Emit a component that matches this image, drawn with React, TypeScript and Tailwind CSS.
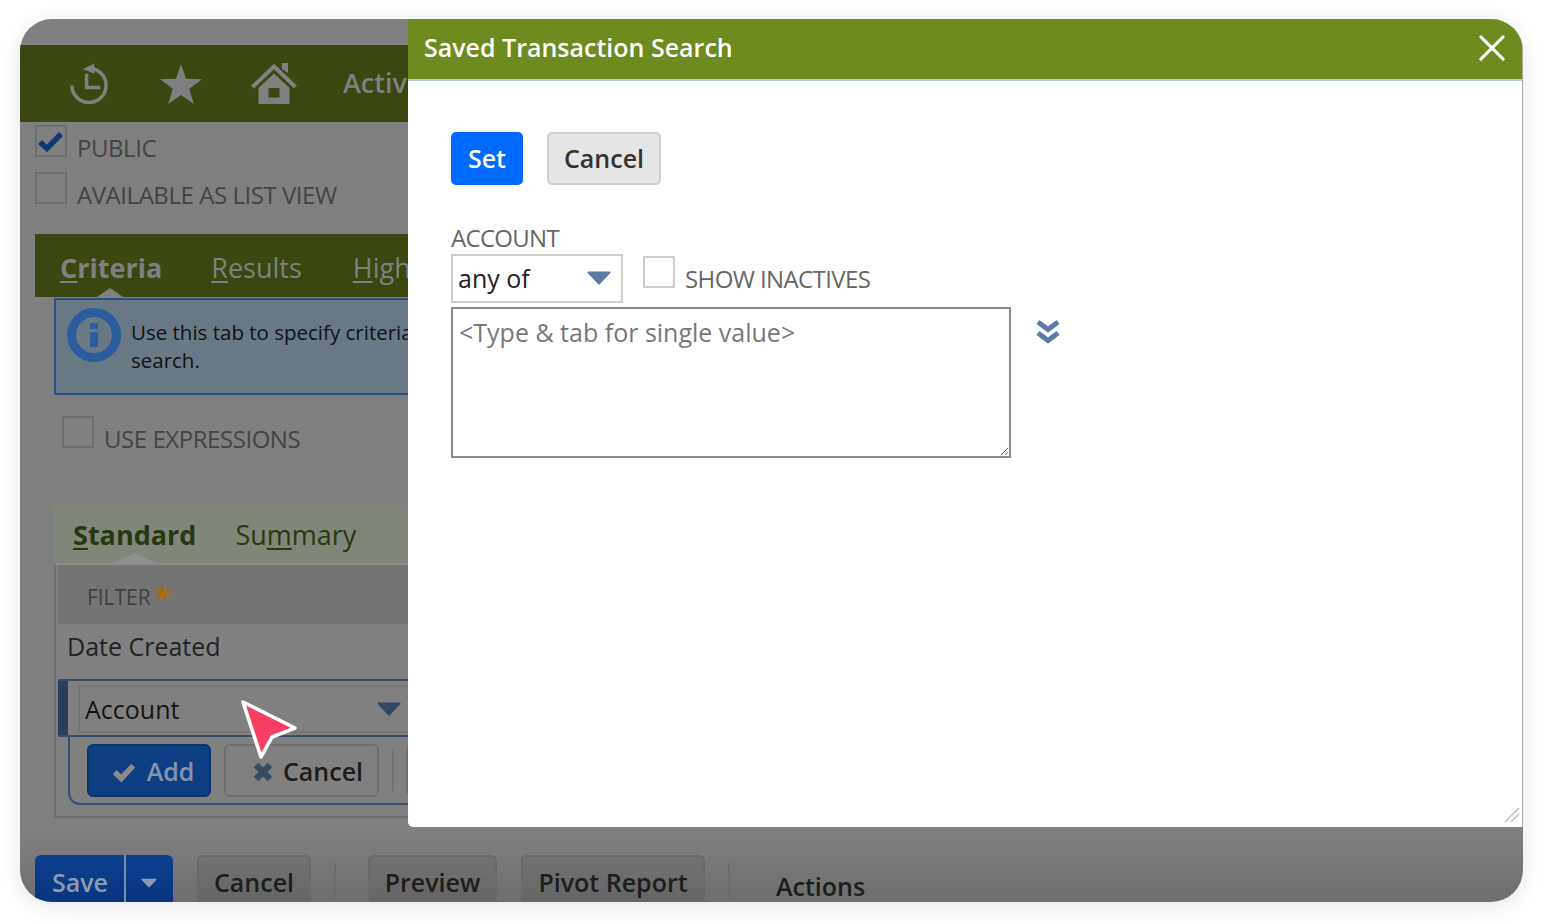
import React from "react";

function Box({ checked = false, border = "border-[#6e6e6e]" }: { checked?: boolean; border?: string }) {
  return (
    <span className={`relative block h-[32px] w-[32px] shrink-0 border-2 ${border}`}>
      {checked && (
        <svg viewBox="0 0 32 32" className="absolute -left-[2px] -top-[2px] h-[32px] w-[32px]">
          <path d="M5 17 L12 23.5 L26 9" fill="none" stroke="#103872" strokeWidth="5.5" />
        </svg>
      )}
    </span>
  );
}

function CheckRow({ label, checked }: { label: string; checked?: boolean }) {
  return (
    <div className="flex h-[47px]">
      <Box checked={checked} />
      <span className="ml-[10px] mt-[10px] text-[24px] leading-[26px] tracking-[-0.45px] text-[#444444]">{label}</span>
    </div>
  );
}

function DownCaret({ className, color }: { className: string; color: string }) {
  return (
    <svg viewBox="0 0 24 14" className={className}>
      <path d="M1.5 1.5 H22.5 L12 12.5 Z" fill={color} stroke={color} strokeWidth="2" strokeLinejoin="round" />
    </svg>
  );
}

function DimButton({ label, className }: { label: string; className: string }) {
  return (
    <div
      className={`flex h-[47px] items-center justify-center rounded-t-[6px] border-2 border-b-0 border-[#696969] bg-gradient-to-b from-[#737373] to-[#646464] pt-[6px] text-[25px] font-semibold text-[#1d1d1d] ${className}`}
    >
      {label}
    </div>
  );
}

function Background() {
  return (
    <div className="flex h-full w-[1400px] flex-col pt-[26px]">
      {/* top navigation */}
      <div className="flex h-[77px] shrink-0 items-center bg-[#3a4710] pl-[50px] text-[#808080]">
        <svg viewBox="0 0 40 42" className="h-[41px] w-[39px]">
          <path d="M2 23 A17.5 17.5 0 1 0 19 5.5" fill="none" stroke="#808080" strokeWidth="3.6" />
          <path d="M13 6 L25 0.5 L25 11 Z" fill="#808080" />
          <path d="M17 11 V25 H31" fill="none" stroke="#808080" strokeWidth="3.6" />
        </svg>
        <svg viewBox="0 0 42 40" className="ml-[51px] h-[40px] w-[42px]">
          <path d="M21 0 L26 14.8 L42 15.2 L29.2 24.8 L33.8 40 L21 31 L8.2 40 L12.8 24.8 L0 15.2 L16 14.8 Z" fill="#808080" />
        </svg>
        <svg viewBox="0 0 46 41" className="ml-[49px] h-[41px] w-[46px]">
          <path d="M31 0 H37 V10 L31 6 Z" fill="#808080" />
          <path d="M1.5 24 L23 3.5 L44.5 24" fill="none" stroke="#808080" strokeWidth="4" />
          <path fillRule="evenodd" d="M7.5 25 L23 10.5 L38.5 25 V41 H7.5 Z M17.5 25 V34.5 H28.5 V25 Z" fill="#808080" />
        </svg>
        <span className="ml-[46px] -mt-[1px] text-[27px] font-semibold">Activity</span>
      </div>

      {/* checks */}
      <div className="h-[112px] shrink-0 pl-[15px] pt-[3px]">
        <CheckRow label="PUBLIC" checked />
        <CheckRow label="AVAILABLE AS LIST VIEW" />
      </div>

      {/* main tabs */}
      <div className="relative ml-[15px] flex h-[63px] shrink-0 items-center gap-[51px] bg-[#3a4710] pl-[25px] pt-[5px] text-[27px] text-[#808080]">
        <span className="-mr-[2px] font-bold">
          <span className="underline underline-offset-[3px]">C</span>riteria
        </span>
        <span>
          <span className="underline underline-offset-[3px]">R</span>esults
        </span>
        <span>
          <span className="underline underline-offset-[3px]">H</span>ighlighting
        </span>
        <svg viewBox="0 0 26 9" className="absolute bottom-0 left-[62px] h-[9px] w-[26px]">
          <path d="M0 9 L13 0 L26 9 Z" fill="#808080" />
        </svg>
      </div>

      {/* info box */}
      <div className="ml-[34px] mt-[1px] flex h-[97px] shrink-0 border-2 border-[#2a5088] bg-[#687985] pl-[11px] pt-[8px]">
        <svg viewBox="0 0 54 54" className="h-[54px] w-[54px] shrink-0">
          <circle cx="27" cy="27" r="22.5" fill="none" stroke="#2a5c9e" strokeWidth="9" />
          <rect x="23" y="15" width="8" height="6" fill="#2a5c9e" />
          <rect x="23" y="24" width="8" height="15" fill="#2a5c9e" />
        </svg>
        <p className="ml-[10px] w-[400px] pt-[10px] text-[20.5px] leading-[28px] text-[#111111]">
          Use this tab to specify criteria for your search.
        </p>
      </div>

      {/* expressions */}
      <div className="ml-[42px] mt-[21px] h-[89px] shrink-0">
        <CheckRow label="USE EXPRESSIONS" />
      </div>

      {/* sub tabs */}
      <div className="relative ml-[34px] flex h-[58px] shrink-0 items-center gap-[39px] bg-[#80867a] pl-[19px] pt-[3px] text-[27px] text-[#27390c]">
        <span className="font-bold">
          <span className="underline underline-offset-[3px]">S</span>tandard
        </span>
        <span>
          Su<span className="underline underline-offset-[3px]">m</span>mary
        </span>
        <svg viewBox="0 0 44 10" className="absolute bottom-0 left-[59px] h-[10px] w-[44px]">
          <path d="M0 10 L22 0 L44 10 Z" fill="#8f8f8f" />
        </svg>
      </div>

      {/* filters panel */}
      <div className="ml-[34px] h-[255px] shrink-0 border-b-2 border-l-2 border-t-2 border-b-[#6e6e6e] border-l-[#6e6e6e] border-t-[#8c8c8c] pl-[2px]">
        <div className="flex h-[59px] items-center bg-[#747474] pl-[29px] pt-[6px] text-[21px] tracking-[-0.05px] text-[#3f3f3f]">
          FILTER
          <span className="ml-[4px] text-[32px] font-semibold leading-none text-[#a96e05]">*</span>
        </div>
        <div className="flex h-[55px] items-center pb-[10px] pl-[9px] text-[25px] text-[#222222]">Date Created</div>
        <div className="flex h-[58px] border-y-2 border-[#38506f]">
          <div className="w-[10px] shrink-0 bg-[#2d3d5c]" />
          <div className="ml-[10px] mt-[4px] flex h-[48px] w-[334px] items-center justify-between border-2 border-[#767676] pl-[5px] pr-[9px] pt-[2px] text-[25px] text-[#141414]">
            Account
            <DownCaret className="-mt-[2px] h-[14px] w-[24px]" color="#2f4868" />
          </div>
        </div>
        <div className="ml-[10px] flex h-[68px] items-start rounded-bl-[12px] border-b-2 border-l-2 border-[#38506f] pl-[17px] pt-[7px]">
          <div className="flex h-[53px] w-[124px] items-center justify-center gap-[11px] rounded-[6px] border-2 border-[#0a3370] bg-[#0d3d82] pl-[8px] pt-[2px] text-[25px] font-semibold text-[#8593a8]">
            <svg viewBox="0 0 26 22" className="h-[22px] w-[24px]">
              <path d="M3 11 L10 18 L23 4" fill="none" stroke="#8a8a8a" strokeWidth="6" />
            </svg>
            Add
          </div>
          <div className="ml-[13px] flex h-[53px] w-[155px] items-center justify-center gap-[9px] rounded-[6px] border-2 border-[#6e6e6e] pl-[12px] pt-[2px] text-[25px] font-semibold text-[#1c1c1c]">
            <svg viewBox="0 0 22 22" className="h-[22px] w-[22px]">
              <path d="M4 4 L18 18 M18 4 L4 18" fill="none" stroke="#3a4a60" strokeWidth="6.5" />
            </svg>
            Cancel
          </div>
          <div className="ml-[13px] mt-[5px] h-[42px] w-[2px] bg-[#727272]" />
          <div className="ml-[12px] h-[53px] w-[60px] rounded-[6px] border-2 border-[#6e6e6e]" />
        </div>
      </div>

      {/* bottom actions */}
      <div className="ml-[15px] mt-[37px] flex h-[47px] shrink-0 items-start">
        <div className="flex h-[47px] w-[138px] rounded-t-[6px] bg-gradient-to-b from-[#0b408f] to-[#08357f] pt-[9px] text-[25px] font-semibold text-[#8c9ab0]">
          <span className="w-[89px] pl-[17px]">Save</span>
          <span className="-mt-[9px] h-[47px] w-[2px] bg-[#7f8ea5]" />
          <DownCaret className="ml-[15px] mt-[14px] h-[10px] w-[16px]" color="#8c9ab0" />
        </div>
        <DimButton label="Cancel" className="ml-[24px] w-[114px]" />
        <div className="ml-[23px] mt-[8px] h-[39px] w-[2px] bg-[#6c6c6c]" />
        <DimButton label="Preview" className="ml-[32px] w-[129px]" />
        <DimButton label="Pivot Report" className="ml-[24px] w-[184px]" />
        <div className="ml-[23px] mt-[8px] h-[39px] w-[2px] bg-[#6c6c6c]" />
        <span className="ml-[46px] pt-[16px] text-[25px] font-semibold leading-[30px] text-[#1d1d1d]">Actions</span>
      </div>
    </div>
  );
}

function Modal() {
  return (
    <div className="absolute left-[388px] top-0 flex h-[808px] w-[1115px] flex-col rounded-bl-[5px] border-r border-[#a8a8a8] bg-white">
      <div className="flex h-[62px] shrink-0 items-center justify-between border-b-2 border-[#b9c9d8] bg-[#6d8b1e] pb-[2px] pl-[16px] pr-[17px] text-[25px] font-semibold text-white">
        Saved Transaction Search
        <svg viewBox="0 0 28 28" className="h-[26px] w-[26px]">
          <path d="M2 2 L26 26 M26 2 L2 26" fill="none" stroke="#ffffff" strokeWidth="3.2" strokeLinecap="round" />
        </svg>
      </div>
      <div className="relative flex-1 pl-[43px] pt-[51px]">
        <div className="flex">
          <div className="flex h-[53px] w-[72px] items-center justify-center rounded-[5px] bg-[#0069ff] text-[25px] font-semibold text-white">Set</div>
          <div className="ml-[24px] flex h-[53px] w-[114px] items-center justify-center rounded-[5px] border-2 border-[#cfcfcf] bg-[#e5e5e5] text-[25px] font-semibold text-[#333333]">Cancel</div>
        </div>
        <div className="mt-[41px] text-[24px] leading-[24px] tracking-[-0.7px] text-[#666666]">ACCOUNT</div>
        <div className="mt-[4px] flex h-[49px] items-start">
          <div className="flex h-[49px] w-[172px] items-center justify-between border-2 border-[#cccccc] pb-[1px] pl-[5px] pr-[10px] text-[25px] leading-[32px] text-[#222222]">
            any of
            <DownCaret className="h-[14px] w-[24px]" color="#5b7ba5" />
          </div>
          <div className="ml-[20px] mt-[2px]">
            <Box border="border-[#cccccc]" />
          </div>
          <span className="ml-[10px] mt-[12px] text-[24px] leading-[26px] tracking-[-0.6px] text-[#666666]">SHOW INACTIVES</span>
        </div>
        <div className="mt-[4px] flex items-start">
          <textarea
            readOnly
            placeholder="<Type & tab for single value>"
            className="block h-[151px] w-[560px] border-2 border-[#8a8a8a] bg-white px-[6px] py-[6px] font-['Open_Sans',sans-serif] text-[25px] leading-[34px] outline-none placeholder:text-[#777777]"
          />
          <svg viewBox="0 0 24 26" className="ml-[25px] mt-[12px] h-[26px] w-[24px]">
            <path d="M2 3 L12 10.5 L22 3 M2 14 L12 21.5 L22 14" fill="none" stroke="#5b7ba5" strokeWidth="5" strokeLinejoin="miter" />
          </svg>
        </div>
        <svg viewBox="0 0 16 16" className="absolute bottom-[4px] right-[2px] h-[16px] w-[16px]">
          <path d="M1 15 L15 1 M7 15 L15 7" fill="none" stroke="#c4c4c4" strokeWidth="1.6" />
        </svg>
      </div>
    </div>
  );
}

export default function App() {
  return (
    <div className="h-[922px] w-[1542px] overflow-hidden bg-white pl-[20px] pt-[19px] font-['Open_Sans',sans-serif]">
      <div className="relative h-[883px] w-[1503px] overflow-hidden rounded-[32px] bg-[linear-gradient(to_bottom,#808080_0%,#808080_92%,#6e6e6e_100%)] shadow-[0_4px_24px_rgba(0,0,0,0.1)]">
        <Background />
        <Modal />
        <svg viewBox="0 0 64 66" className="absolute left-[217px] top-[678px] h-[66px] w-[64px]">
          <path d="M6 5 L58 31 L35 40 L24 60 Z" fill="#f83f63" stroke="#ffffff" strokeWidth="3.6" strokeLinejoin="round" />
        </svg>
      </div>
    </div>
  );
}
